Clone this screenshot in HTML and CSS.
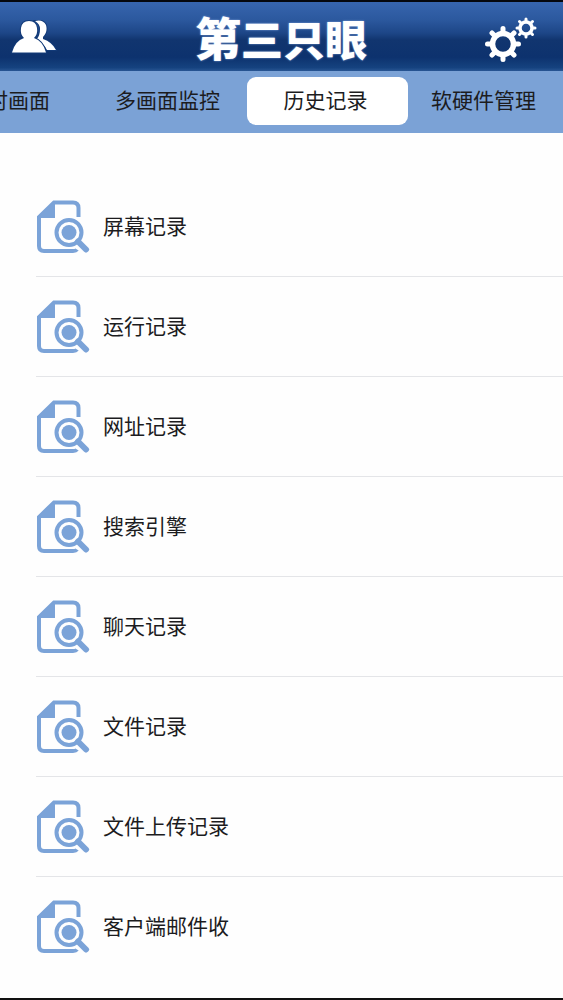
FILE: index.html
```html
<!DOCTYPE html>
<html lang="zh-CN">
<head>
    <meta charset="UTF-8">
    <meta name="viewport" content="width=device-width, initial-scale=1.0">
    <title>第三只眼 - 历史记录</title>
    <link rel="stylesheet" href="styles.css">
</head>
<body>
    <!-- 列表共用图标 -->
    <svg class="symbols" aria-hidden="true">
        <symbol id="icon-record" viewBox="0 0 54 54">
            <path class="line" d="M42.500 17V8Q42.500 2.500 37 2.500H18L3 17V46Q3 51 8 51H37Q40 51 41 49.500"/>
            <path class="fill" d="M17 2H19V18H2V16.500Z"/>
            <circle class="lens" cx="33" cy="32.500" r="12.500"/>
            <circle class="fill" cx="33" cy="32.500" r="7.500"/>
            <path class="handle" d="M42 41.500L50 49.500"/>
        </symbol>
    </svg>

    <header class="header">
        <button class="icon-button" type="button" aria-label="用户">
            <svg class="icon-users" viewBox="0 0 46 34" aria-hidden="true">
                <path d="M24 1Q32 -1 35 5Q37 12 32 17V19Q41 22 45 30H36Q32 23 26 19Q29 15 29 9Q29 4 24 1Z"/>
                <path d="M13 18Q9 14 10 8Q11 1 18 1Q25 1 26 8Q27 14 23 18Q32 21 35 32.500H1Q4 21 13 18Z"/>
            </svg>
        </button>
        <h1 class="logo"><span class="logo-first">第</span>三只眼</h1>
        <button class="icon-button" type="button" aria-label="设置">
            <svg class="icon-gears" viewBox="0 0 52 46" aria-hidden="true">
                <g transform="translate(18 27)">
                    <circle r="10.500" stroke-width="5.500"/>
                    <path stroke-width="5" d="M0 -12V-15.500M0 12V15.500M-12 0H-15.500M12 0H15.500M-8.500 -8.500L-11 -11M8.500 8.500L11 11M-8.500 8.500L-11 11M8.500 -8.500L11 -11"/>
                </g>
                <g transform="translate(41 11)">
                    <circle r="6" stroke-width="3.500"/>
                    <path stroke-width="3" d="M0 -7V-9M0 7V9M-7 0H-9M7 0H9M-5 -5L-6.500 -6.500M5 5L6.500 6.500M-5 5L-6.500 6.500M5 -5L6.500 -6.500"/>
                </g>
            </svg>
        </button>
    </header>

    <nav class="tabs">
        <a class="tab" href="#">实时画面</a>
        <a class="tab" href="#">多画面监控</a>
        <a class="tab active" href="#">历史记录</a>
        <a class="tab" href="#">软硬件管理</a>
    </nav>

    <main class="content">
        <ul class="record-list">
            <li><a class="record" href="#"><svg class="record-icon" aria-hidden="true"><use href="#icon-record"/></svg>屏幕记录</a></li>
            <li><a class="record" href="#"><svg class="record-icon" aria-hidden="true"><use href="#icon-record"/></svg>运行记录</a></li>
            <li><a class="record" href="#"><svg class="record-icon" aria-hidden="true"><use href="#icon-record"/></svg>网址记录</a></li>
            <li><a class="record" href="#"><svg class="record-icon" aria-hidden="true"><use href="#icon-record"/></svg>搜索引擎</a></li>
            <li><a class="record" href="#"><svg class="record-icon" aria-hidden="true"><use href="#icon-record"/></svg>聊天记录</a></li>
            <li><a class="record" href="#"><svg class="record-icon" aria-hidden="true"><use href="#icon-record"/></svg>文件记录</a></li>
            <li><a class="record" href="#"><svg class="record-icon" aria-hidden="true"><use href="#icon-record"/></svg>文件上传记录</a></li>
            <li><a class="record" href="#"><svg class="record-icon" aria-hidden="true"><use href="#icon-record"/></svg>客户端邮件收</a></li>
        </ul>
    </main>
</body>
</html>
```
FILE: styles.css
```css
* {
    box-sizing: border-box;
}
body {
    display: flex;
    flex-direction: column;
    min-height: 100vh;
    margin: 0;
    background: #fefefe;
    color: #1c1c1e;
    font-family: "Liberation Sans", "Noto Sans CJK SC", sans-serif;
    font-size: 21px;
    line-height: 30px;
    overflow-x: hidden;
}
a {
    color: inherit;
    text-decoration: none;
}
.symbols {
    position: absolute;
    width: 0;
    height: 0;
}

/* 顶部 */
.header {
    display: grid;
    grid-template-columns: 1fr auto 1fr;
    align-items: center;
    height: 71px;
    padding: 0 26px 0 11px;
    border-top: 2px solid #05070d;
    background: linear-gradient(#3765ae 0%, #2c599f 25%, #1d4687 45%, #11356f 55%, #0d326e 80%, #15427f 95%, #285593 100%);
}
.icon-button {
    display: flex;
    padding: 0;
    border: none;
    background: none;
    cursor: pointer;
}
.icon-button:last-child {
    justify-content: flex-end;
    padding-top: 6px;
}
.icon-users {
    width: 46px;
    height: 34px;
    fill: #fff;
    stroke: #123a78;
    stroke-width: 2;
    paint-order: stroke;
}
.icon-gears {
    width: 52px;
    height: 46px;
    fill: none;
    stroke: #fff;
    stroke-linecap: round;
}
.logo {
    margin: 0;
    padding-left: 14px;
    color: #fff;
    font-family: "Noto Sans CJK SC", sans-serif;
    font-size: 42px;
    font-weight: 900;
    line-height: 52px;
    text-shadow: 0 0 2px #8fb0e6;
}
.logo-first {
    font-size: 46px;
}

/* 导航标签，可横向滑动 */
.tabs {
    display: flex;
    align-items: center;
    height: 62px;
    padding-bottom: 3px;
    background: #7ba2d6;
    overflow: hidden;
}
.tab {
    flex: none;
    width: 155px;
    padding: 9px 27px 9px 23px;
    border-radius: 9px;
    text-align: center;
    white-space: nowrap;
}
.tab:first-child {
    width: 164px;
    margin-left: -72px;
}
.tab.active {
    width: 161px;
    background: #fff;
}

/* 记录列表 */
.content {
    flex: 1;
    padding-top: 44px;
    border-bottom: 2px solid #111;
}
.record-list {
    margin: 0;
    padding: 0 0 0 36px;
    list-style: none;
}
.record {
    display: flex;
    align-items: center;
    gap: 13px;
    height: 100px;
    border-bottom: 1px solid #e4e5e8;
}
.record-list li:last-child .record {
    border-bottom: none;
}
.record-icon {
    width: 54px;
    height: 54px;
}
.line {
    fill: none;
    stroke: #7ba3d8;
    stroke-width: 4;
}
.lens {
    fill: #fefefe;
    stroke: #7ba3d8;
    stroke-width: 4;
}
.fill {
    fill: #7ba3d8;
}
.handle {
    fill: none;
    stroke: #7ba3d8;
    stroke-width: 6;
    stroke-linecap: round;
}
```
